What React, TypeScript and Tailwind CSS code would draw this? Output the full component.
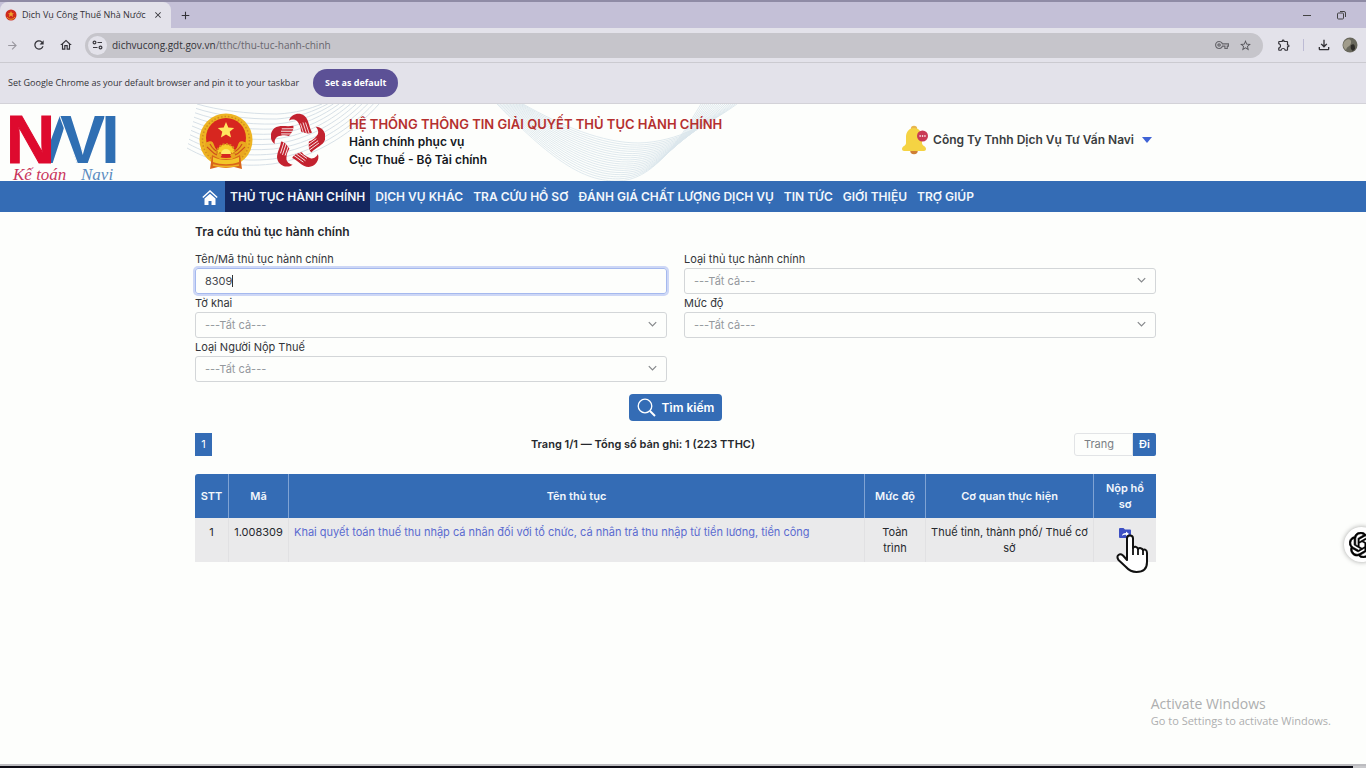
import type { ReactNode } from "react";
import {
  MdArrowForward,
  MdRefresh,
  MdOutlineHome,
  MdOutlineVpnKey,
  MdStarBorder,
  MdOutlineExtension,
  MdOutlineFileDownload,
  MdClose,
  MdAdd,
} from "react-icons/md";
import { SiOpenai } from "react-icons/si";

const RAYS = Array.from({ length: 11 }, (_, i) => i);
const WAVE = Array.from({ length: 19 }, (_, i) => i / 18);

function mix(a: number[], b: number[], t: number) {
  return a.map((v, i) => Math.round((v + (b[i] - v) * t) * 10) / 10);
}

function Waves() {
  const outer = [310, 0, 370, 62, 400, 77, 430, 77, 465, 77, 490, 40, 514, 0];
  const inner = [336, 0, 375, 22, 415, 39, 452, 39, 490, 38, 525, 18, 550, 0];
  const low = [0, 44, 25, 58, 50, 64, 85, 60, 130, 54, 170, 25, 192, 0];
  const high = [10, 0, 30, 6, 60, 10, 90, 10, 110, 9, 122, 5, 135, 0];
  const curve = (p: number[]) =>
    `M${p[0]} ${p[1]}C${p[2]} ${p[3]} ${p[4]} ${p[5]} ${p[6]} ${p[7]}C${p[8]} ${p[9]} ${p[10]} ${p[11]} ${p[12]} ${p[13]}`;
  return (
    <svg className="absolute top-0 left-[187px]" width="560" height="77" fill="none" aria-hidden="true">
      {RAYS.map((i) => (
        <path key={i} d={curve(mix(high, low, i / 10))} stroke="#d3dde4" strokeWidth="0.9" />
      ))}
      {WAVE.map((t) => (
        <path key={t} d={curve(mix(outer, inner, t))} stroke="#dbe6ec" strokeWidth="0.9" />
      ))}
    </svg>
  );
}

function NaviLogo() {
  return (
    <svg className="overflow-visible" width="120" height="77" viewBox="0 0 120 77" role="img" aria-label="Navi">
      <g fontFamily="'Liberation Sans',sans-serif" fontWeight="700" fontSize="68">
        <text x="42" y="59" fill="#2f6fb3">Λ</text>
        <text x="6" y="59" fill="#de0a2e" stroke="#de0a2e" strokeWidth="1">N</text>
        <text x="60" y="59" fill="#2f6fb3" stroke="#fdfefc" strokeWidth="2" paintOrder="stroke">V</text>
        <text x="101" y="59" fill="#2f6fb3" stroke="#fdfefc" strokeWidth="2" paintOrder="stroke">I</text>
      </g>
      <g fontFamily="'Liberation Serif',serif" fontStyle="italic" fontSize="17">
        <text x="13" y="76" fill="#c9365c">Kế toán</text>
        <text x="81" y="76" fill="#5b8cc0">Navi</text>
      </g>
    </svg>
  );
}

function Emblem() {
  return (
    <svg width="54" height="58" viewBox="0 0 54 58" aria-hidden="true">
      <circle cx="27" cy="27" r="26.500" fill="#eeb422" />
      <circle cx="27" cy="27" r="23.500" fill="none" stroke="#d08a20" strokeWidth="1.500" strokeDasharray="1.500 2" />
      <circle cx="27" cy="25" r="20" fill="#d7261f" />
      <path d="M27 9l2.300 5.400 5.900.5-4.500 3.900 1.400 5.700-5.100-3-5.100 3 1.400-5.700-4.500-3.900 5.900-.5z" fill="#ffe660" />
      <path d="M6 30c6-3 8-2 9 2s4 6 8 10l-4 6C10 45 6 40 6 30zM48 30c-6-3-8-2-9 2s-4 6-8 10l4 6c9-3 13-8 13-18z" fill="#e9a91f" />
      <path d="M8 34c3 2 5 6 10 8M46 34c-3 2-5 6-10 8M11 31c2 4 5 7 10 9M43 31c-2 4-5 7-10 9" stroke="#cf4d1d" strokeWidth="1.200" fill="none" />
      <path d="M18 40a9 9 0 0 1 18 0z" fill="#f7cf2a" stroke="#d98a1c" strokeWidth="2" strokeDasharray="2 1.500" />
      <path d="M22 41a5 5 0 0 1 10 0z" fill="#ffe86a" />
      <path d="M13 42l-2 14 8-2 8 1 8-1 8 2-2-14-8 4H21z" fill="#d9661b" />
      <path d="M14 44c8 4 18 4 26 0v5c-8 3-18 3-26 0z" fill="#f3c62a" />
      <path d="M14 52c8 2 18 2 26 0" stroke="#f0b526" strokeWidth="1.500" fill="none" />
    </svg>
  );
}

function HandStar() {
  return (
    <svg width="54" height="58" viewBox="-27 -29 54 58" aria-hidden="true">
      {["rotate(0)", "rotate(72)", "rotate(144)", "rotate(216)", "rotate(288)"].map((r) => (
        <g key={r} transform={r}>
          <path d="M-9 -21.500C-7 -28 1 -30 6 -26.500C11 -23 10.500 -16 14 -9.500C11 -7.500 6 -9 3 -10.500C3 -15 1 -18.500 -1 -21C-4 -23.500 -7 -22.500 -9 -21.500Z" fill="#c3222f" />
          <path d="M2.500 -18.500L5.500 -9M5 -19.500L8.500 -8.500M7.500 -19.500L11.200 -8.500" stroke="#fdfefc" strokeWidth="0.800" />
        </g>
      ))}
    </svg>
  );
}

function Bell() {
  return (
    <svg width="28" height="30" viewBox="0 0 28 30" aria-hidden="true">
      <circle cx="12" cy="4" r="3.200" fill="#e8b64e" />
      <circle cx="12" cy="25.500" r="3.800" fill="#cf7f35" />
      <path d="M12 3c5 0 8 4 8 9v6c0 3 4 3 4 6 0 1-1 2-2 2H2c-1 0-2-1-2-2 0-3 4-3 4-6v-6c0-5 3-9 8-9z" fill="#f5d343" />
      <circle cx="20.500" cy="11" r="5.500" fill="#c93a55" />
      <path d="M17.500 11h1.300M19.900 11h1.300M22.300 11h1.300" stroke="#fff" strokeWidth="1.300" />
    </svg>
  );
}

function Hand() {
  return (
    <svg
      className="pointer-events-none absolute top-[15px] left-[22px] z-10"
      width="34"
      height="42"
      viewBox="0 0 34 42"
      aria-hidden="true"
    >
      <path
        d="M11 27V5.500a3 3 0 0 1 6 0V15c1-2 4-1.500 5 1 1.500-1.500 4-1 5 1 2-1 4 0 4 3V29c0 7-4 10-10.500 10-5 0-7.500-1.500-10.500-5L2.500 27C-.5 22 4 20 7 22.500z"
        fill="#fff"
        stroke="#111"
        strokeWidth="2"
        strokeLinejoin="round"
      />
      <path d="M17 14v8M22 16v6M27 17v5" stroke="#111" strokeWidth="1.800" />
    </svg>
  );
}

function BrowserBar() {
  return (
    <header className="bg-[#e3e2ea] font-['Open_Sans','Noto_Sans',sans-serif] text-[#333238]">
      <div className="flex h-7 items-stretch border-t-2 border-[#8f8ba5] bg-[#c4c0d7]">
        <div className="flex w-[171px] items-center rounded-t-lg bg-[#e3e2ea] pr-2 pl-[5px]">
          <svg width="12" height="12" viewBox="0 0 12 12" aria-hidden="true">
            <circle cx="6" cy="6" r="5.500" fill="#cf2a1c" />
            <path d="M6 2l1 2.200h2L7.500 5.500 8 8 6 6.500 4 8l.5-2.500L3 4.200h2z" fill="#f0a32a" />
            <path d="M2 8c2 3 6 3 8 0" stroke="#e09a25" fill="none" />
          </svg>
          <span className="ml-[5px] grow text-[9px] whitespace-nowrap">Dịch Vụ Công Thuế Nhà Nước</span>
          <button aria-label="Close tab"><MdClose size={10} /></button>
        </div>
        <button aria-label="New tab" className="ml-2"><MdAdd size={13} /></button>
        <div className="ml-auto flex items-center gap-[26px] pr-5">
          <button aria-label="Minimize" className="h-px w-2 bg-[#444]" />
          <button aria-label="Restore">
            <svg width="9" height="9" viewBox="0 0 9 9" fill="none" stroke="#444" aria-hidden="true">
              <rect x="0.500" y="2" width="6" height="6" rx="1" />
              <path d="M3 .5h4a1.500 1.500 0 0 1 1.500 1.500v4" />
            </svg>
          </button>
        </div>
      </div>
      <div className="flex h-[35px] items-center border-b border-[#cbcad0] pr-2 pl-[6px]">
        <button aria-label="Forward" className="mr-[13px] text-[#98969e]"><MdArrowForward size={13} /></button>
        <button aria-label="Reload" className="mr-[13px]"><MdRefresh size={14} /></button>
        <button aria-label="Home" className="mr-[12px]"><MdOutlineHome size={14} /></button>
        <div className="flex h-[25px] grow items-center rounded-full bg-[#c6c5cb] pr-[11px] pl-[3px]">
          <button aria-label="Site information" className="mr-[5px] flex size-[19px] items-center justify-center rounded-full bg-[#e3e2ea]">
            <svg width="11" height="10" viewBox="0 0 11 10" fill="none" stroke="#3b3a40" strokeWidth="1.200" aria-hidden="true">
              <circle cx="2.500" cy="2.500" r="1.400" />
              <path d="M5.500 2.500H10M1 7.500h4.500" />
              <circle cx="8.500" cy="7.500" r="1.400" />
            </svg>
          </button>
          <p className="grow text-[10px] whitespace-nowrap">
            dichvucong.gdt.gov.vn<span className="text-[#68666e]">/tthc/thu-tuc-hanh-chinh</span>
          </p>
          <button aria-label="Passwords" className="mr-[10px] text-[#66656b]"><MdOutlineVpnKey size={14} /></button>
          <button aria-label="Bookmark" className="text-[#55545a]"><MdStarBorder size={13} /></button>
        </div>
        <button aria-label="Extensions" className="ml-[14px]"><MdOutlineExtension size={14} /></button>
        <span className="mx-[12px] h-3 w-px bg-[#bdbbd4]" />
        <button aria-label="Downloads"><MdOutlineFileDownload size={16} /></button>
        <button aria-label="Profile" className="ml-[10px]">
          <svg width="16" height="16" viewBox="0 0 16 16" aria-hidden="true">
            <circle cx="8" cy="8" r="7.500" fill="#69685d" />
            <path d="M3 4c3-3 7-2 6 2S5 9 4 13C0 10 1 6 3 4z" fill="#a19c8c" />
            <path d="M9 8c3-2 4 0 4 4l-2 2c-2-1-3-3-2-6z" fill="#2d2b28" />
          </svg>
        </button>
      </div>
      <div className="flex h-[41px] items-center gap-[14px] border-b border-[#d3d2d8] pl-2">
        <p className="text-[9px] whitespace-nowrap">Set Google Chrome as your default browser and pin it to your taskbar</p>
        <button className="h-7 rounded-full bg-[#5c5196] px-3 text-[9px] font-bold whitespace-nowrap text-white">Set as default</button>
      </div>
    </header>
  );
}

const LINKS = ["DỊCH VỤ KHÁC", "TRA CỨU HỒ SƠ", "ĐÁNH GIÁ CHẤT LƯỢNG DỊCH VỤ", "TIN TỨC", "GIỚI THIỆU", "TRỢ GIÚP"];

function Field({ id, label, children }: { id: string; label: string; children: ReactNode }) {
  return (
    <div>
      <label htmlFor={id} className="block h-[18px] text-[11px] leading-[18px] text-[#33353a]">{label}</label>
      <div className="relative h-[26px]">{children}</div>
    </div>
  );
}

function SelectField({ id, label }: { id: string; label: string }) {
  return (
    <Field id={id} label={label}>
      <select id={id} className="size-full appearance-none rounded-[3px] border border-[#d3d6d8] bg-transparent px-[9px] text-[11px] text-[#94989c]">
        <option>---Tất cả---</option>
      </select>
      <svg className="pointer-events-none absolute top-[9px] right-[10px]" width="9" height="7" viewBox="0 0 9 7" fill="none" stroke="#85888b" strokeWidth="1.200" aria-hidden="true">
        <path d="M.8 1.200l3.700 3.800 3.700-3.800" />
      </svg>
    </Field>
  );
}

export default function App() {
  const th = "border-l border-[#7fa3d4] px-1 font-semibold first:border-l-0";
  const td = "border-l border-[#e1e1e3] px-[5px] py-[6px] first:border-l-0";
  return (
    <div className="relative flex min-h-screen flex-col overflow-hidden bg-[#fdfefc] font-[Inter,'Noto_Sans',sans-serif] text-[11px] text-[#25282d]">
      <BrowserBar />
      <div className="relative flex h-[77px] items-start">
        <Waves />
        <div className="absolute top-0 left-0"><NaviLogo /></div>
        <div className="relative mr-[15px] grow">
          <div className="mx-auto flex w-full max-w-[961px] items-start pt-[9px] pl-1">
            <Emblem />
            <div className="ml-[18px]"><HandStar /></div>
            <div className="ml-[24px] pt-[2px] text-[12px] leading-[18px] font-semibold whitespace-nowrap text-[#14171c]">
              <h1 className="text-[13px] text-[#b5302f]">HỆ THỐNG THÔNG TIN GIẢI QUYẾT THỦ TỤC HÀNH CHÍNH</h1>
              <p>Hành chính phục vụ</p>
              <p>Cục Thuế - Bộ Tài chính</p>
            </div>
            <button className="mt-3 mr-1 ml-auto flex items-center whitespace-nowrap">
              <Bell />
              <span className="ml-[3px] text-[12px] font-semibold text-[#3a3d40]">Công Ty Tnhh Dịch Vụ Tư Vấn Navi</span>
              <svg className="ml-2" width="10" height="6" viewBox="0 0 10 6" aria-hidden="true"><path d="M0 0h10L5 6z" fill="#3f63d6" /></svg>
            </button>
          </div>
        </div>
      </div>
      <nav className="bg-[#346cb5] pr-[15px]">
        <div className="mx-auto flex h-[31px] w-full max-w-[961px] items-stretch text-[12px] font-semibold whitespace-nowrap text-[#f2f7fc]">
          <a href="#home" aria-label="Trang chủ" className="flex w-[30px] items-center justify-center pt-[2px]">
            <svg width="16" height="15" viewBox="0 0 16 15" aria-hidden="true">
              <path d="M.8 7.500L8 1l7.200 6.500" fill="none" stroke="#fff" strokeWidth="1.500" />
              <path d="M2.500 8.500L8 3.700l5.500 4.800V15h-4v-4h-3v4h-4z" fill="#fff" />
            </svg>
          </a>
          <a href="#thu-tuc" className="flex items-center bg-[#14275f] px-[5px]">THỦ TỤC HÀNH CHÍNH</a>
          {LINKS.map((l) => (
            <a key={l} href="#muc" className="flex items-center px-[5px]">{l}</a>
          ))}
        </div>
      </nav>
      <main className="grow pr-[15px]">
        <div className="mx-auto w-full max-w-[961px]">
          <h2 className="pt-[10px] text-[12px] leading-5 font-semibold">Tra cứu thủ tục hành chính</h2>
          <form className="mt-2">
            <div className="grid grid-cols-2 gap-x-[17px]">
              <Field id="ten" label="Tên/Mã thủ tục hành chính">
                <input id="ten" defaultValue="8309" className="size-full rounded-[3px] border border-[#a5b9ee] bg-transparent px-[9px] text-[11px] text-[#45484d] ring-2 ring-[#cdd7f6] outline-none" />
                <span className="absolute top-[7px] left-[37px] h-3 w-px bg-[#333]" />
              </Field>
              <SelectField id="loai" label="Loại thủ tục hành chính" />
              <SelectField id="to-khai" label="Tờ khai" />
              <SelectField id="muc-do" label="Mức độ" />
              <SelectField id="nguoi-nop" label="Loại Người Nộp Thuế" />
            </div>
            <button type="button" className="mx-auto mt-3 flex h-[27px] items-center gap-[6px] rounded bg-[#346cb5] px-2 text-[12px] font-semibold text-white">
              <svg width="19" height="19" viewBox="0 0 19 19" fill="none" stroke="#fff" aria-hidden="true">
                <circle cx="8" cy="8" r="6.800" strokeWidth="1.300" />
                <path d="M13 13l5 5" strokeWidth="2" />
              </svg>
              Tìm kiếm
            </button>
          </form>
          <div className="mt-3 flex h-[23px] items-stretch justify-between">
            <button className="w-[17px] bg-[#346cb5] text-white">1</button>
            <p className="self-center font-semibold">Trang 1/1 — Tổng số bản ghi: 1 (223 TTHC)</p>
            <div className="flex">
              <input aria-label="Trang" placeholder="Trang" className="w-[59px] rounded-l-[3px] border border-[#e2e4e6] bg-transparent px-[9px] text-[11px] placeholder:text-[#7b7f84]" />
              <button className="w-[23px] rounded-r-[2px] bg-[#346cb5] font-semibold text-white">Đi</button>
            </div>
          </div>
          <table className="mt-[18px] w-full table-fixed border-separate border-spacing-0 text-center leading-4">
            <colgroup>
              <col className="w-[33px]" />
              <col className="w-[60px]" />
              <col />
              <col className="w-[61px]" />
              <col className="w-[168px]" />
              <col className="w-[63px]" />
            </colgroup>
            <thead className="bg-[#346cb5] text-[#f2f7fc]">
              <tr className="h-11">
                <th className={`${th} rounded-tl-[3px]`}>STT</th>
                <th className={th}>Mã</th>
                <th className={th}>Tên thủ tục</th>
                <th className={th}>Mức độ</th>
                <th className={th}>Cơ quan thực hiện</th>
                <th className={`${th} px-2`}>Nộp hồ sơ</th>
              </tr>
            </thead>
            <tbody className="bg-[#eaeaeb] align-top">
              <tr>
                <td className={td}>1</td>
                <td className={td}>1.008309</td>
                <td className={`${td} text-left`}>
                  <a href="#1.008309" className="text-[#5a6bd0]">Khai quyết toán thuế thu nhập cá nhân đối với tổ chức, cá nhân trả thu nhập từ tiền lương, tiền công</a>
                </td>
                <td className={td}>Toàn trình</td>
                <td className={td}>Thuế tỉnh, thành phố/ Thuế cơ sở</td>
                <td className={`${td} relative`}>
                  <button aria-label="Nộp hồ sơ" className="align-top">
                    <svg className="mt-[4px]" width="12" height="10" viewBox="0 0 12 10" aria-hidden="true">
                      <path d="M1 0h3.500L6 1.500h5a1 1 0 0 1 1 1V9a1 1 0 0 1-1 1H1a1 1 0 0 1-1-1V1a1 1 0 0 1 1-1z" fill="#3d50c4" />
                      <path d="M3 8c0-2 1.500-3 4-3V3.500L10 6 7 8V6.800C5 6.800 4 7 3 8z" fill="#fff" />
                    </svg>
                  </button>
                  <Hand />
                </td>
              </tr>
            </tbody>
          </table>
        </div>
      </main>
      <button aria-label="Trợ lý" className="absolute top-[527px] -right-[13px] flex size-[35px] items-center justify-center rounded-full bg-white text-black shadow-[0_0_5px_rgba(0,0,0,0.35)]">
        <SiOpenai size={26} stroke="currentColor" strokeWidth={0.6} />
      </button>
      <aside className="absolute right-[35px] bottom-[39px] font-['Open_Sans','Noto_Sans',sans-serif] whitespace-nowrap text-[#adaeaf]">
        <p className="text-[14px] leading-[18px]">Activate Windows</p>
        <p className="text-[11px] leading-4">Go to Settings to activate Windows.</p>
      </aside>
      <div className="border-t-2 border-[#bcbcc0] bg-[#c9c9cc] pr-[13px]">
        <div className="h-[2px] bg-[#0c0c14]" />
      </div>
    </div>
  );
}
